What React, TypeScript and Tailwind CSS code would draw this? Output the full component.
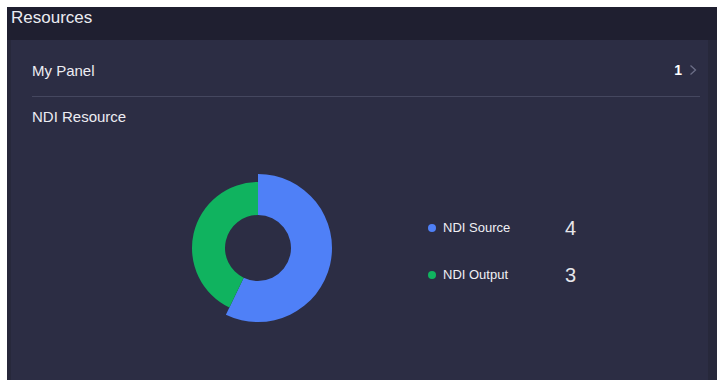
import React from 'react';

const font = { fontFamily: '"Liberation Sans", Arial, sans-serif' };

const legend = [
  { label: 'NDI Source', value: 4, dot: 'bg-[#4f80f7]' },
  { label: 'NDI Output', value: 3, dot: 'bg-[#10b35f]' },
];

function Donut() {
  return (
    <svg width="150" height="150" viewBox="0 0 150 150" className="shrink-0">
      <path
        d="M75 1 A74 74 0 1 1 42.89 141.67 L60.68 104.73 A33 33 0 1 0 75 42 Z"
        fill="#4f80f7"
      />
      <path
        d="M46.36 134.46 A66 66 0 0 1 75 9 L75 42 A33 33 0 0 0 60.68 104.73 Z"
        fill="#10b35f"
      />
    </svg>
  );
}

export default function App() {
  return (
    <div className="min-h-screen bg-white p-[7px]" style={font}>
      <div className="w-[710px] h-[373px] flex flex-col bg-[#27283b]">
        <header className="h-[33px] flex-none bg-[#1f1f30] pl-[4px] pt-[1px]">
          <h1 className="text-[17px] leading-[20px] text-[#ececf2]">Resources</h1>
        </header>

        <div className="flex-1 ml-[4px] mr-[9px] bg-[#2c2d44] pl-[21px] pr-[8px]">
          <div className="h-[57px] pt-1 flex items-center justify-between border-b border-[#45475f]">
            <span className="text-[15px] leading-[17px] text-[#ececf2]">My Panel</span>
            <div className="flex items-center gap-[7px] pr-[3px]">
              <span className="text-[14px] font-bold text-white">1</span>
              <svg width="8" height="12" viewBox="0 0 8 12">
                <polyline points="1.5,1.5 6.5,6 1.5,10.5" fill="none" stroke="#6c6e87" strokeWidth="1.3" />
              </svg>
            </div>
          </div>

          <div className="mt-[11px] text-[15px] leading-[17px] text-[#ececf2]">NDI Resource</div>

          <div className="mt-[48px] flex items-start pl-[151px]">
            <Donut />
            <div className="ml-[95px] mt-[45px] flex flex-col gap-[27px]">
              {legend.map((item) => (
                <div key={item.label} className="h-[20px] flex items-center">
                  <span className={`w-[8px] h-[8px] rounded-full ${item.dot}`} />
                  <span className="ml-[7px] w-[122px] text-[13px] text-[#f0f0f5]">{item.label}</span>
                  <span className="text-[20px] leading-[20px] text-[#e6e6ea]">{item.value}</span>
                </div>
              ))}
            </div>
          </div>
        </div>
      </div>
    </div>
  );
}
